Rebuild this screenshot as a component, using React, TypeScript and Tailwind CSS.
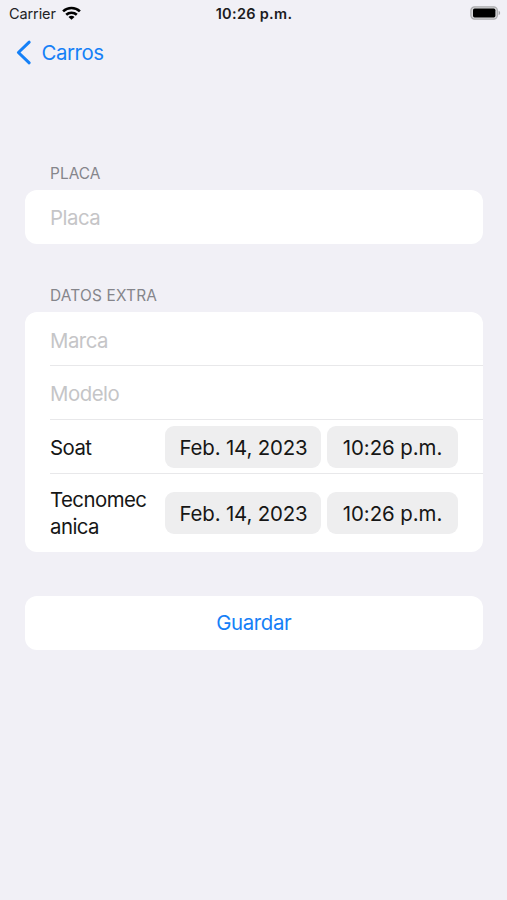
import React from 'react';

interface DateRowProps {
  label: string;
  date: string;
  time: string;
  className: string;
  labelClassName: string;
  pillClassName: string;
}

const StatusBar: React.FC = () => (
  <div className="grid grid-cols-3 items-center h-[27px] pl-[9px] pr-[6px]">
    <div className="flex items-center gap-[6px] text-[14.5px] tracking-[-0.1px] text-[#222224]">
      <span>Carrier</span>
      <svg className="-mt-px" width="19" height="14" viewBox="0 0 19 14" fill="none" stroke="#000" strokeWidth="2.6">
        <path d="M1.1 5.4C5.8.9 13.2.9 17.9 5.4" />
        <path d="M4.2 8.7c2.9-2.7 7.7-2.7 10.6 0" />
        <path d="M9.5 13.8 6.5 10.9c1.6-1.5 4.4-1.5 6 0z" fill="#000" stroke="none" />
      </svg>
    </div>
    <span className="-ml-[2px] text-center text-[14.5px] font-semibold tracking-[0.3px] text-[#1c1c1e] whitespace-nowrap">
      10:26 p.m.
    </span>
    <svg className="justify-self-end -mt-px" width="31" height="14" viewBox="0 0 31 14">
      <rect x="0.9" y="0.9" width="26.4" height="12.2" rx="3.6" fill="#d8d8da" stroke="#a9a9ac" strokeWidth="1.2" />
      <rect x="3" y="2.6" width="22.4" height="8.8" rx="1.6" fill="#000" />
      <path d="M28.6 4.8c2 .7 2 3.7 0 4.4z" fill="#a4a4a7" />
    </svg>
  </div>
);

const SectionTitle: React.FC<{ className: string; children: React.ReactNode }> = ({ className, children }) => (
  <h2 className={`pl-[25px] h-[20px] text-[15.4px] leading-[20px] text-[#85858b] ${className}`}>{children}</h2>
);

const Pill: React.FC<{ className: string; children: React.ReactNode }> = ({ className, children }) => (
  <button className={`h-[42px] shrink-0 rounded-[9px] bg-[#eeeeef] text-center whitespace-nowrap ${className}`}>
    {children}
  </button>
);

const DateRow: React.FC<DateRowProps> = ({ label, date, time, className, labelClassName, pillClassName }) => (
  <div className={`flex items-center ${className}`}>
    <span className={`w-[100px] mr-[15px] shrink-0 break-all leading-[27px] tracking-[-0.55px] ${labelClassName}`}>
      {label}
    </span>
    <Pill className={`w-[156px] mr-[6px] pl-px tracking-[-0.15px] ${pillClassName}`}>{date}</Pill>
    <Pill className={`w-[131px] tracking-[-0.05px] ${pillClassName}`}>{time}</Pill>
  </div>
);

const App: React.FC = () => {
  return (
    <div className="w-[507px] h-[900px] overflow-hidden bg-[#f1f0f6] font-['Inter',sans-serif] text-[20.4px] text-[#161616]">
      <StatusBar />
      <nav className="flex items-center h-[51px] pl-[16px] gap-[9.5px] text-[#1580f7]">
        <svg width="16" height="25" viewBox="0 0 16 25" fill="none" stroke="currentColor" strokeWidth="3" strokeLinecap="round" strokeLinejoin="round">
          <path d="M13.2 2.2 2.4 12.5l10.8 10.3" />
        </svg>
        <span className="pt-[2px] tracking-[-0.45px]">Carros</span>
      </nav>

      <main className="pl-[25px] pr-[24.5px] pt-[85px]">
        <SectionTitle className="tracking-[0.05px] pt-px">PLACA</SectionTitle>
        <input
          className="block w-full h-[54px] mt-[7px] px-[25px] rounded-[12px] bg-white tracking-[-0.5px] outline-none placeholder:text-[#c5c5c7]"
          placeholder="Placa"
        />

        <div className="pt-[42px]">
          <SectionTitle className="tracking-[0.2px]">DATOS EXTRA</SectionTitle>
          <div className="mt-[6px] h-[240px] pl-[25px] rounded-[12px] bg-white">
            <input
              className="block w-full h-[54px] pt-[3px] border-b border-[#e8e8ea] tracking-[-0.5px] outline-none placeholder:text-[#c5c5c7]"
              placeholder="Marca"
            />
            <input
              className="block w-full h-[54px] pt-[2px] border-b border-[#e8e8ea] tracking-[-0.5px] outline-none placeholder:text-[#c5c5c7]"
              placeholder="Modelo"
            />
            <DateRow
              label="Soat"
              date="Feb. 14, 2023"
              time="10:26 p.m."
              className="h-[54px] border-b border-[#e8e8ea]"
              labelClassName="pt-[2px]"
              pillClassName="pt-[3px]"
            />
            <DateRow
              label="Tecnomecanica"
              date="Feb. 14, 2023"
              time="10:26 p.m."
              className="h-[78px]"
              labelClassName="pt-0"
              pillClassName="pt-[2px]"
            />
          </div>
        </div>

        <button className="block w-full h-[54px] mt-[44px] pt-px rounded-[12px] bg-white text-center tracking-[-0.35px] text-[#1580f7]">
          Guardar
        </button>
      </main>
    </div>
  );
};

export default App;
